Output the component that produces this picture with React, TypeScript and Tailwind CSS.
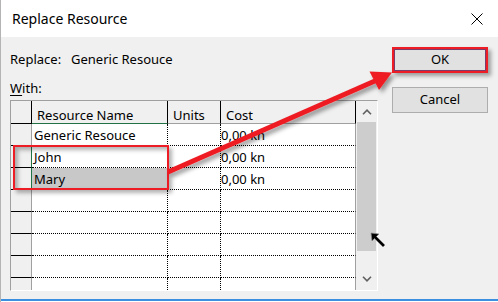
import React from "react";

type Row = { name?: string; cost?: string; mark?: boolean; selected?: boolean };

const rows: Row[] = [
  { name: "Generic Resouce", cost: "0,00 kn" },
  { name: "John", cost: "0,00 kn", mark: true },
  { name: "Mary", cost: "0,00 kn", mark: true, selected: true },
  {},
  {},
  {},
  {},
  {},
];

function Chevron({ up }: { up?: boolean }) {
  return (
    <svg width="10" height="6" viewBox="0 0 10 6">
      <path
        d={up ? "M1 5.2 L5 1.2 L9 5.2" : "M1 0.8 L5 4.8 L9 0.8"}
        fill="none"
        stroke="#606060"
        strokeWidth="1.6"
      />
    </svg>
  );
}

function ResourceGrid() {
  return (
    <div className="mt-[3px] flex h-[191px] w-[368px] border border-t-[#a0a0a0] border-l-[#a0a0a0] border-r-white border-b-white">
      <div className="flex w-[345px] flex-col overflow-hidden">
        {/* header */}
        <div className="flex h-[23px] shrink-0 bg-[#f0f0f0] leading-[18px]">
          <div className="w-[21px] border-r border-b border-black" />
          <div className="w-[136px] border-r border-b border-r-black border-b-[#217346] pl-[5px] pt-[5px]">
            Resource Name
          </div>
          <div className="w-[53px] border-r border-b border-r-black border-b-[#a0a0a0] pl-[5px] pt-[5px]">
            Units
          </div>
          <div className="w-[135px] border-r border-b border-r-black border-b-[#a0a0a0] pl-[5px] pt-[5px]">
            Cost
          </div>
        </div>
        {rows.map((r, i) => (
          <div key={i} className="flex h-[22px] shrink-0 leading-[18px]">
            <div
              className={`w-[21px] border-r border-b border-b-black bg-[#f0f0f0] ${
                r.mark ? "border-r-[#217346]" : "border-r-[#a0a0a0]"
              }`}
            />
            <div
              className={`flex w-[136px] items-center border-r border-b border-dotted border-black pl-[2px] ${
                r.selected ? "bg-[#c8c8c8]" : "bg-white"
              }`}
            >
              {r.name}
            </div>
            <div className="w-[53px] border-r border-b border-dotted border-black bg-white" />
            <div className="flex w-[135px] items-center border-r border-b border-dotted border-r-[#a0a0a0] border-b-black bg-white [border-right-style:solid]">
              {r.cost}
            </div>
          </div>
        ))}
      </div>
      {/* scrollbar */}
      <div className="flex w-[21px] flex-col bg-[#f0f0f0]">
        <div className="flex h-[21px] items-center justify-center">
          <Chevron up />
        </div>
        <div className="ml-[1px] h-[129px] w-[19px] bg-[#cdcdcd]" />
        <div className="flex-1" />
        <div className="flex h-[22px] items-center justify-center">
          <Chevron />
        </div>
      </div>
    </div>
  );
}

export default function App() {
  return (
    <div className="relative flex h-[302px] w-[498px] flex-col overflow-hidden border-l border-[#b4b4b4] bg-white font-['Noto_Sans',sans-serif] text-[13px] text-black">
      {/* title bar */}
      <div className="flex h-[37px] shrink-0 items-center justify-between bg-white pl-[11px] pr-[15px]">
        <div className="text-[14px] leading-[20px]">Replace Resource</div>
        <svg width="12" height="12" viewBox="0 0 12 12">
          <path d="M0.5 0.5 L11.5 11.5 M11.5 0.5 L0.5 11.5" stroke="#000" strokeWidth="1" />
        </svg>
      </div>

      {/* body */}
      <div className="flex flex-1 items-start bg-[#f0f0f0] pl-[9px]">
        <div className="flex w-[368px] flex-col pt-[13px] leading-[18px]">
          <div className="flex">
            <span className="w-[61px]">Replace:</span>
            <span>Generic Resouce</span>
          </div>
          <div className="mt-[11px]">
            <span className="underline underline-offset-2">W</span>ith:
          </div>
          <ResourceGrid />
        </div>

        <div className="ml-[14px] flex w-[96px] flex-col pt-[10px]">
          <button className="flex h-[26px] items-center justify-center border-2 border-[#ee1c24] bg-[#e1e1e1] shadow-[3px_3px_4px_rgba(0,0,0,0.35)]">
            <span className="flex h-full w-full items-center justify-center border border-[#7a3a6a]">OK</span>
          </button>
          <button className="mt-[14px] flex h-[26px] items-center justify-center border border-[#adadad] bg-[#e1e1e1]">
            Cancel
          </button>
        </div>
      </div>

      <div className="h-[2px] shrink-0 bg-[#3c8fde]" />
      <div className="h-[1px] shrink-0 bg-white" />

      {/* annotation: red box round John and Mary */}
      <div className="pointer-events-none absolute left-[12px] top-[145px] h-[45px] w-[156px] border-2 border-[#ee1c24] shadow-[3px_3px_4px_rgba(0,0,0,0.3),inset_3px_3px_4px_rgba(0,0,0,0.3)]" />

      {/* annotation: arrow to OK */}
      <svg className="pointer-events-none absolute left-0 top-0" width="498" height="302" viewBox="0 0 498 302">
        <defs>
          <filter id="sh" x="-10%" y="-10%" width="130%" height="130%">
            <feDropShadow dx="3" dy="3" stdDeviation="2" floodColor="#000" floodOpacity="0.4" />
          </filter>
        </defs>
        <g filter="url(#sh)">
          <line x1="167" y1="172" x2="375" y2="80.5" stroke="#ee1c24" strokeWidth="5" />
          <polygon points="391,72.5 368.5,71.5 378,90" fill="#ee1c24" />
        </g>
      </svg>

      {/* mouse cursor */}
      <svg className="pointer-events-none absolute left-[369px] top-[232px]" width="17" height="17" viewBox="0 0 17 17">
        <path
          d="M1 1 L9 2 L6.5 4.5 L15 13 L13 15 L4.5 6.5 L2 9 Z"
          fill="#000"
          stroke="#8a8a8a"
          strokeWidth="0.7"
          strokeLinejoin="round"
        />
      </svg>
    </div>
  );
}
